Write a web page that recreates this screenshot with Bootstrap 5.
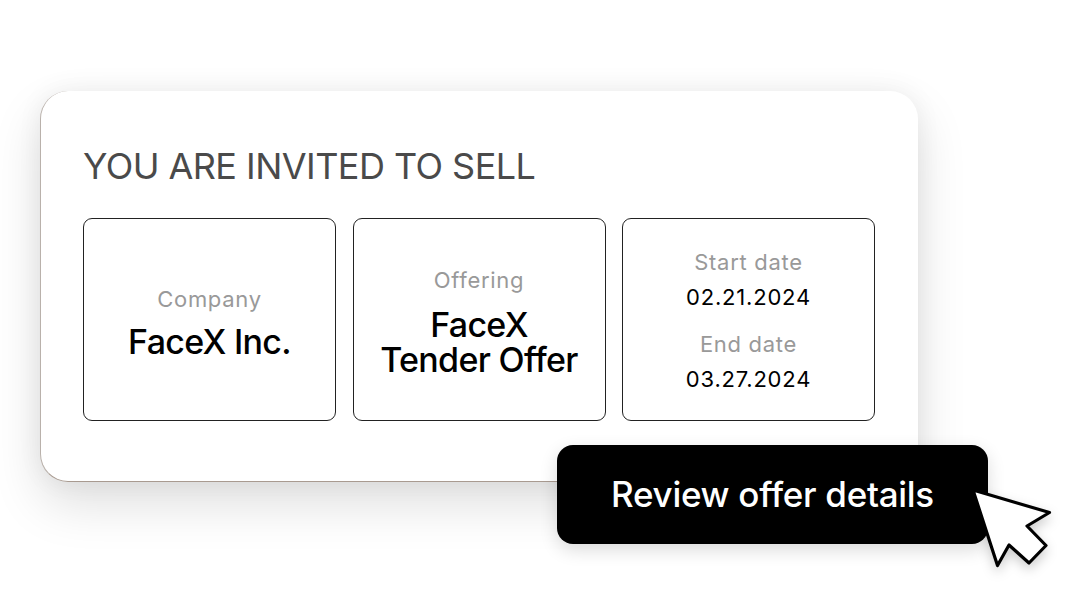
<!DOCTYPE html>
<html lang="en">
<head>
<meta charset="utf-8">
<title>Invite</title>
<link rel="stylesheet" href="https://cdn.jsdelivr.net/npm/bootstrap@5.3.0/dist/css/bootstrap.min.css">
<style>
html,body{margin:0;height:609px;overflow:hidden;background:#fff;font-family:Inter,"Noto Sans",sans-serif}
.stage{position:relative;width:1083px;height:609px;padding:91px 165px 0 40px}
.invite-panel{height:391px;padding:54px 42px 0 42px;background:#fff;border-radius:28px;border-bottom:1.5px solid #a89a90;border-left:1px solid #b9b1ab;box-shadow:0 22px 50px rgba(0,0,0,.13),0 0 26px rgba(0,0,0,.06)}
.invite-title{margin:0 0 31px;font-size:36px;line-height:42px;font-weight:400;letter-spacing:-.55px;color:#4a4a4a;white-space:nowrap}
.tile-row{display:grid;grid-template-columns:repeat(3,253px);gap:16.5px}
.info-tile{height:203px;border:1px solid #222;border-radius:9px;text-align:center;color:#000}
.tile-shift{padding-top:4px}
.tile-shift-sm{padding-top:2px}
.tile-label{font-size:22px;line-height:30px;color:#999;letter-spacing:.7px}
.tile-value{font-size:34px;line-height:35px;font-weight:500;letter-spacing:-.7px}
.tile-date{font-size:22px;line-height:30px;letter-spacing:.8px}
.gap-company{margin-bottom:10px}
.gap-offering{margin-bottom:12px}
.gap-date{margin-bottom:5px}
.gap-next{margin-bottom:17px}
.review-btn{position:absolute;left:557px;top:445px;width:431px;height:99px;border:0;border-radius:16px;background:#000;color:#fff;font-size:35px;font-weight:500;letter-spacing:-.3px;box-shadow:0 6px 18px rgba(0,0,0,.14)}
.review-btn:hover{background:#000;color:#fff}
.pointer-mark{position:absolute;left:965px;top:482px;filter:drop-shadow(0 5px 6px rgba(0,0,0,.2))}
</style>
</head>
<body>
<div class="stage">
  <div class="invite-panel">
    <h1 class="invite-title">YOU ARE INVITED TO SELL</h1>
    <div class="tile-row">
      <div class="info-tile tile-shift d-flex flex-column justify-content-center">
        <div class="tile-label gap-company">Company</div>
        <div class="tile-value">FaceX Inc.</div>
      </div>
      <div class="info-tile tile-shift-sm d-flex flex-column justify-content-center">
        <div class="tile-label gap-offering">Offering</div>
        <div class="tile-value">FaceX<br>Tender Offer</div>
      </div>
      <div class="info-tile tile-shift-sm d-flex flex-column justify-content-center">
        <div class="tile-label gap-date">Start date</div>
        <div class="tile-date gap-next">02.21.2024</div>
        <div class="tile-label gap-date">End date</div>
        <div class="tile-date">03.27.2024</div>
      </div>
    </div>
  </div>
  <button type="button" class="btn review-btn">Review offer details</button>
  <svg class="pointer-mark" width="100" height="100" viewBox="965 482 100 100" aria-hidden="true">
    <path d="M973 490 1049.500 512.500 1027 526 1046 545.500 1029 563 1009 545 997.500 565.500Z" fill="#fff" stroke="#000" stroke-width="3.200" stroke-linejoin="round"/>
  </svg>
</div>
<script src="https://cdn.jsdelivr.net/npm/bootstrap@5.3.0/dist/js/bootstrap.bundle.min.js"></script>
</body>
</html>
